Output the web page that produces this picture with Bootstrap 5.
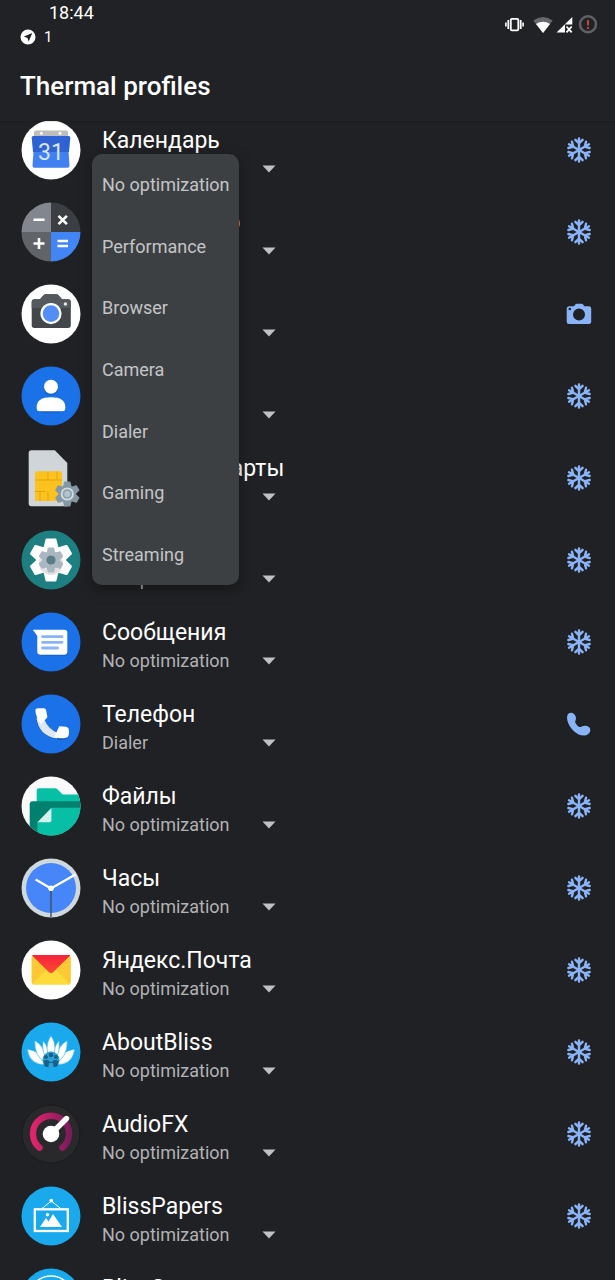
<!DOCTYPE html>
<html lang="en">
<head>
<meta charset="utf-8">
<meta name="viewport" content="width=device-width, initial-scale=1">
<title>Thermal profiles</title>
<link href="https://cdn.jsdelivr.net/npm/bootstrap@5.3.0/dist/css/bootstrap.min.css" rel="stylesheet">
<style>
  body { background: #202124; color: #fff; font-family: Roboto, "Noto Sans", sans-serif; }
  .status-bar { height: 48px; padding: 0 17px 0 20px; }
  .clock-text { font-size: 18px; line-height: 26px; padding-left: 29px; }
  .notice { font-size: 15px; line-height: 22px; gap: 8px; }
  .app-title { font-size: 26px; line-height: 30px; font-weight: 500; padding: 23px 20px 20px; }
  .app-header { background: #212225; box-shadow: 0 0 2px rgba(0,0,0,.3); z-index: 2; }
  .profile-list { overflow: hidden auto; scrollbar-width: none; min-height: 0; }
  .profile-list::-webkit-scrollbar { display: none; }
  .profile-list ul { margin-top: -12px; }
  .app-row { height: 82px; padding: 0 22px 0 21px; gap: 21px; }
  .app-icon { width: 60px; height: 60px; }
  .state-icon { width: 28px; height: 28px; color: #8ab4f8; }
  .app-info { padding: 18px 0 8px; }
  .app-name { font-size: 23px; line-height: 28px; }
  .profile-select {
    width: 180px; height: 28px; padding: 0; border: 0; border-radius: 0; font-size: 18px; line-height: 28px; color: #b1b2b4;
    background: transparent url("data:image/svg+xml,%3Csvg xmlns='http://www.w3.org/2000/svg' viewBox='0 0 14 8'%3E%3Cpath d='M.5 .5h13L7 7.500z' fill='%23c0c1c4'/%3E%3C/svg%3E") no-repeat 160px 10px / 14px 8px;
  }
  .profile-menu {
    position: absolute; top: -1px; left: -10px; height: 431px; min-width: 147px; padding: 0; border: 0; border-radius: 10px;
    background: #3c4043; box-shadow: 0 4px 14px rgba(0,0,0,.35); overflow: hidden; z-index: 5;
  }
  .profile-menu .dropdown-item { padding: 1px 8px 0 10px; font-size: 18px; line-height: 28px; color: #c4c5c7; }
  .profile-menu .dropdown-item:hover { background: #4a4e52; }
</style>
</head>
<body>
<svg class="position-absolute" width="0" height="0" aria-hidden="true">
  <defs>
    <clipPath id="disc"><circle cx="30" cy="30" r="29.500"/></clipPath>
    <linearGradient id="pink"><stop stop-color="#e0246c"/><stop offset="1" stop-color="#7d1b5c"/></linearGradient>
    <linearGradient id="redflap" x2="0" y2="1"><stop stop-color="#f5223c"/><stop offset="1" stop-color="#ff4a30"/></linearGradient>
    <g id="gear"><circle r="15"/><path id="tooth" d="M-7.500-12L-5.500-20.500Q-5.300-21.500-4.500-21.500H4.500Q5.300-21.500 5.500-20.500L7.500-12z"/><use href="#tooth" transform="rotate(60)"/><use href="#tooth" transform="rotate(120)"/><use href="#tooth" transform="rotate(180)"/><use href="#tooth" transform="rotate(240)"/><use href="#tooth" transform="rotate(300)"/></g>
  </defs>
</svg>

<div class="d-flex flex-column vh-100 overflow-hidden">
  <header class="app-header position-relative flex-shrink-0">
    <div class="status-bar d-flex justify-content-between">
      <div>
        <div class="clock-text">18:44</div>
        <div class="notice d-flex align-items-center">
          <svg width="16" height="16" viewBox="0 0 16 16"><circle cx="8" cy="8" r="7.500" fill="#fff"/><path d="M12.300 4L8.700 12.500 7.500 9 3.800 7.500z" fill="#202124"/></svg>
          <span>1</span>
        </div>
      </div>
      <div class="d-flex align-items-center">
        <svg width="94" height="20" viewBox="504 14 94 20" aria-label="Vibrate, Wi-Fi, no signal, battery low" role="img">
          <g fill="none" stroke="#fff"><rect x="510.800" y="18.800" width="7.500" height="11.500" rx="1" stroke-width="1.800"/><path d="M508.300 20v9M520.700 20v9" stroke-width="1.800"/><path d="M505.900 22.500v4M523.100 22.500v4" stroke-width="1.600"/></g>
          <path d="M533.300 20.500Q543 13.500 552.700 20.500L543 33z" fill="#68696c"/><path d="M536 24Q543 19.500 550 24L543 33z" fill="#fff"/>
          <path d="M572.300 17v7.500H565v8h-8.500z" fill="#fff"/><path d="M566.500 26.500l5.200 5.800m0-5.800l-5.200 5.800" stroke="#fff" stroke-width="1.800"/>
          <circle cx="588" cy="24.300" r="8" fill="none" stroke="#606165" stroke-width="2.500"/><path d="M588 20v5.500M588 27v2" stroke="#e5533d" stroke-width="1.600"/>
        </svg>
      </div>
    </div>
    <h1 class="app-title m-0">Thermal profiles</h1>
  </header>

  <main class="profile-list flex-grow-1">
    <ul class="list-unstyled mb-0" id="apps"></ul>
  </main>
</div>

<script src="https://cdn.jsdelivr.net/npm/bootstrap@5.3.0/dist/js/bootstrap.bundle.min.js"></script>
<script>
  const profiles = ['No optimization', 'Performance', 'Browser', 'Camera', 'Dialer', 'Gaming', 'Streaming'];
  const disc = c => `<circle cx="30" cy="30" r="29.5" fill="${c}"/>`;
  const art = {
    calendar: disc('#fff') + `<path d="M13 18v-5.500q0-2 2-2h30q2 0 2 2V18z" fill="#bdbdbd"/><circle cx="20.400" cy="13.300" r="1.500" fill="#fff"/><circle cx="39" cy="13.300" r="1.500" fill="#fff"/><path d="M12.500 31h35l1 15q0 1.800-2 1.800h-33q-2 0-2-1.800z" fill="#4080f0"/><path d="M10.700 17.500q0-1.500 1.500-1.500h35.600q1.500 0 1.500 1.500L48 32H12z" fill="#2f62d3"/><text x="30" y="40" text-anchor="middle" font-size="23" fill="#d9e6ff" font-family="Roboto">31</text>`,
    calculator: `<g clip-path="url(#disc)"><path d="M0 0h30v30H0z" fill="#82868e"/><path d="M30 0h30v30H30z" fill="#3b3e42"/><path d="M0 30h30v30H0z" fill="#606368"/><path d="M30 30h30v30H30z" fill="#4285f4"/></g><path d="M12.500 17.800h11M12.500 41.500h11M18 36v11M37.500 13.800l8.400 8.400m0-8.400l-8.400 8.400M36.500 39h10.500M36.500 44h10.500" stroke="#fff" stroke-width="2.600"/>`,
    camera: disc('#fff') + `<path d="M13 15.300h6l3.500-4q1-1 2.200-1h10.600q1.200 0 2.200 1l3.500 4h6.500q2.300 0 2.300 2.500v23.500q0 2.700-2.700 2.700H13.400q-2.700 0-2.700-2.700V17.800q0-2.500 2.300-2.500z" fill="#43474b"/><path d="M10.700 24v-6.200q0-2.500 2.300-2.500h6l3.500-4q1-1 2.200-1h10.600q1.200 0 2.200 1l3.500 4h6.500q2.300 0 2.300 2.500V24z" fill="#54595d"/><circle cx="30" cy="29.600" r="10.600" fill="#fff"/><circle cx="30" cy="29.600" r="8.300" fill="#548df5"/><circle cx="44.400" cy="20" r="1.700" fill="#e8e8e8"/>`,
    contacts: disc('#1b72e8') + `<g fill="#1559bd"><circle cx="30" cy="22" r="7"/><rect x="16" y="33" width="28" height="13.500" rx="6"/></g><g fill="#fff"><circle cx="30" cy="20.700" r="7"/><path d="M15.700 41q0-9.700 14.300-9.700T44.300 41v1.300q0 3-3 3H18.700q-3 0-3-3z"/></g>`,
    sim: `<path d="M10.500 2.300h23.300L46.300 15v43.300H10.500q-2.800 0-2.800-2.800V5q0-2.700 2.800-2.700z" fill="#cfd5d9"/><rect x="14" y="23.300" width="27" height="29.700" rx="1.500" fill="#fcc21f"/><path d="M14 32h27M14 43.500h10M27 23.300V32M36 23.300V32M19 43.500V53M27 43.500V53" stroke="#e5a50f" fill="none"/><use href="#gear" transform="translate(46.300 46) scale(.58)" fill="#8498a4"/><circle cx="46.300" cy="46" r="5.700" fill="#8fa3ae" stroke="#cfdbe1" stroke-width="1.800"/><circle cx="46.300" cy="46" r="3" fill="#b6c6ce"/>`,
    settings: disc('#1d7f80') + `<use href="#gear" x="30" y="30" fill="#fff"/><circle cx="30" cy="33" r="12" fill="#e3e0e2"/><use href="#gear" transform="translate(30 30) scale(.58)" fill="#a9b7c0"/><circle cx="30" cy="30" r="4.600" fill="#5b7c88"/>`,
    messages: disc('#1b72e8') + `<path d="M13 19.500h31q3 0 3 3v18q0 3-3 3H20q-3 0-3-3V25z" fill="#1559bd"/><path d="M11.800 17.700h31.400q3.200 0 3.200 3.200v18.600q0 3.200-3.200 3.200H19.500q-3.200 0-3.200-3.200V24z" fill="#fff"/><path d="M21.500 24.700h19.500M21.500 30.300h19.500M21.500 36h15" stroke="#8ab4f8" stroke-width="2.800" stroke-linecap="round"/>`,
    phone: disc('#1b72e8') + `<path d="M15 26Q19 43 40 46l6-1 2-4-20-6-7-8z" fill="#1559bd"/><path d="M15.500 24Q18 42 36 44.500L37 39q-10-4-13.500-13z" fill="#dfe6f5"/><path d="M17 14.300h6q1.600 0 2 1.700l1.300 6q.3 1.300-.7 2.300l-6 6Q15 23 14.400 17q-.2-2.700 2.600-2.700zM38.500 32.300l6.500.4q2.700.3 2.900 3 .2 3-.2 5.500-.6 2.600-3.200 2.900-6 .8-11.300-1.200l4.500-9.500q.3-.8.800-1.100z" fill="#fff"/>`,
    files: `<g clip-path="url(#disc)"><path d="M0 0h60v60H0z" fill="#fafafa"/><path d="M15.700 30V14.500q0-2.200 2.200-2.200h16q1.600 0 2.800 1.200l5 5.100H60V30z" fill="#07bfa5"/><path d="M8.700 60V28.300q0-3 3-3H60V60z" fill="#00806f"/><path d="M16.400 46.300L30.400 31.700H60V60H16.400z" fill="#07bfa5"/><path d="M16.400 46.300L30.400 32v12.300q0 2-2 2z" fill="#d6f1ee"/></g>`,
    clock: disc('#cfd8dc') + `<circle cx="30" cy="30" r="25" fill="#4786f8"/><path d="M30 30v29" stroke="#3d5166" stroke-width="1.400"/><path d="M14.600 21.400L30 30.500 54.500 16.500" fill="none" stroke="#fff" stroke-width="2.300"/><circle cx="30" cy="30.300" r="2.800" fill="#fff"/>`,
    mail: disc('#fff') + `<rect x="10.700" y="15" width="39" height="29.700" rx="2.500" fill="#fddb3a"/><path d="M11 17L25 30 12 43.500q-1.300-.5-1.300-1.800V18zM49.400 17L35 30l13.300 13.500q1.400-.5 1.400-1.800V18z" fill="#fcc934"/><path d="M12 15h36.500q1 0 .3 1L31.800 32.500q-1.800 1.400-3.600 0L11.500 16q-.6-1 .5-1z" fill="url(#redflap)"/>`,
    bliss: disc('#19a9ec') + `<g fill="#fff" stroke="#19a9ec" stroke-width=".6"><path d="M6.200 27q14 2 20 15.500Q8.500 44 6.200 27zM53.800 27q-14 2-20 15.500Q51.500 44 53.800 27z"/><path d="M13.800 18.500q11 6 12.500 23.500-13.500-7-12.500-23.500zM46.200 18.500q-11 6-12.500 23.500 13.500-7 12.500-23.500z"/><path d="M22 18.500q7 8 6 20.500-8-7-6-20.500zM38 18.500q-7 8-6 20.500 8-7 6-20.500z"/><path d="M30 13.500q8 12 0 26-8-14 0-26z"/></g><circle cx="30" cy="38" r="8.500" fill="#2f9fd5"/><g fill="#15628a"><circle cx="30" cy="33" r="2.300"/><circle cx="25" cy="35" r="2"/><circle cx="35" cy="35" r="2"/><path d="M22.500 38.500l4-.5 3.500 2.500 3.500-2.500 4 .5-.8 5q-2 2.500-4.200 1l-.5-3.500h-4l-.5 3.500q-2.200 1.500-4.200-1z"/></g>`,
    audiofx: `<circle cx="30" cy="30" r="29" fill="#29292b" stroke="#1a1a1c"/><path d="M18.600 43.700a18 18 0 1 1 22.800 0" fill="none" stroke="url(#pink)" stroke-width="6.300" stroke-linecap="round"/><path d="M30 30L45.500 14.500" stroke="#fff" stroke-width="5.400" stroke-linecap="round"/><circle cx="30" cy="30" r="8.300" fill="#fff"/>`,
    papers: disc('#19a9ec') + `<g fill="none" stroke="#fff"><rect x="13.800" y="23.300" width="33" height="21.700" stroke-width="2.300"/><path d="M21 22.500L30.300 15 39.700 22.500"/></g><circle cx="30.300" cy="14.700" r="1.900" fill="#fff"/><path d="M19 41l6-9 2.500 3.500L32 28l9 13z" fill="#fff"/><circle cx="26.500" cy="28.700" r="1.700" fill="#fff"/>`,
    stats: disc('#19a9ec') + `<circle cx="30" cy="30" r="22" fill="none" stroke="#fff" stroke-width="1.600"/>`
  };
  const arm = 'M0 0V-11.500M-3.600-10.200L0-6.600 3.600-10.200';
  const state = {
    snow: `<g transform="translate(14 14)" stroke="currentColor" stroke-width="2.400" fill="none" stroke-linecap="round">${[0, 60, 120, 180, 240, 300].map(a => `<path d="${arm}" transform="rotate(${a})"/>`).join('')}</g>`,
    camera: `<path fill="currentColor" fill-rule="evenodd" d="M4 6.300h5l1.500-2q.5-.6 1.300-.6h4.800q.8 0 1.300.6l1.500 2h4.300q2.500 0 2.500 2.500v12.700q0 2.500-2.500 2.500H4q-2.300 0-2.300-2.500V8.800q0-2.500 2.300-2.500zM14 8.500a6 6 0 1 0 0 12 6 6 0 0 0 0-12zM4.800 7.700a1 1 0 0 0 0 2.600 1 1 0 0 0 0-2.600z"/>`,
    phone: `<path fill="currentColor" d="M3 4Q6 1.500 9 4q3 3 1.500 6.500-.8 1.300 0 2.500 1.500 3 4 4 1.200.3 2.200-.5 2.500-1.300 5.500-.5 3.800 1.700 3 5-1.500 4.300-6 4.500-6.500 0-11.500-5.500Q2.500 14.500 2 8q0-2.500 1-4z"/>`
  };
  const apps = [
    ['Календарь', 'calendar', 0], ['Калькулятор', 'calculator', 0], ['Камера', 'camera', 3, 'camera'],
    ['Контакты', 'contacts', 0], ['Меню SIM-карты', 'sim', 0], ['Настройки', 'settings', 0],
    ['Сообщения', 'messages', 0], ['Телефон', 'phone', 4, 'phone'], ['Файлы', 'files', 0],
    ['Часы', 'clock', 0], ['Яндекс.Почта', 'mail', 0], ['AboutBliss', 'bliss', 0],
    ['AudioFX', 'audiofx', 0], ['BlissPapers', 'papers', 0], ['BlissStats', 'stats', 0]
  ];
  const menu = `<div class="profile-menu dropdown-menu show d-flex flex-column">${profiles.map(p => `<button type="button" class="dropdown-item flex-fill">${p}</button>`).join('')}</div>`;
  document.getElementById('apps').innerHTML = apps.map(([name, icon, chosen, mark = 'snow'], i) => `
    <li class="app-row d-flex align-items-center">
      <svg class="app-icon flex-shrink-0" viewBox="0 0 60 60" aria-hidden="true">${art[icon]}</svg>
      <div class="app-info flex-grow-1">
        <label class="app-name d-block text-nowrap" for="app${i}">${name}</label>
        <div class="position-relative">
          <select class="profile-select form-select" id="app${i}">${profiles.map((p, n) => `<option${n === chosen ? ' selected' : ''}>${p}</option>`).join('')}</select>
          ${i === 0 ? menu : ''}
        </div>
      </div>
      <svg class="state-icon flex-shrink-0" viewBox="0 0 28 28" aria-hidden="true">${state[mark]}</svg>
    </li>`).join('');
</script>
</body>
</html>
